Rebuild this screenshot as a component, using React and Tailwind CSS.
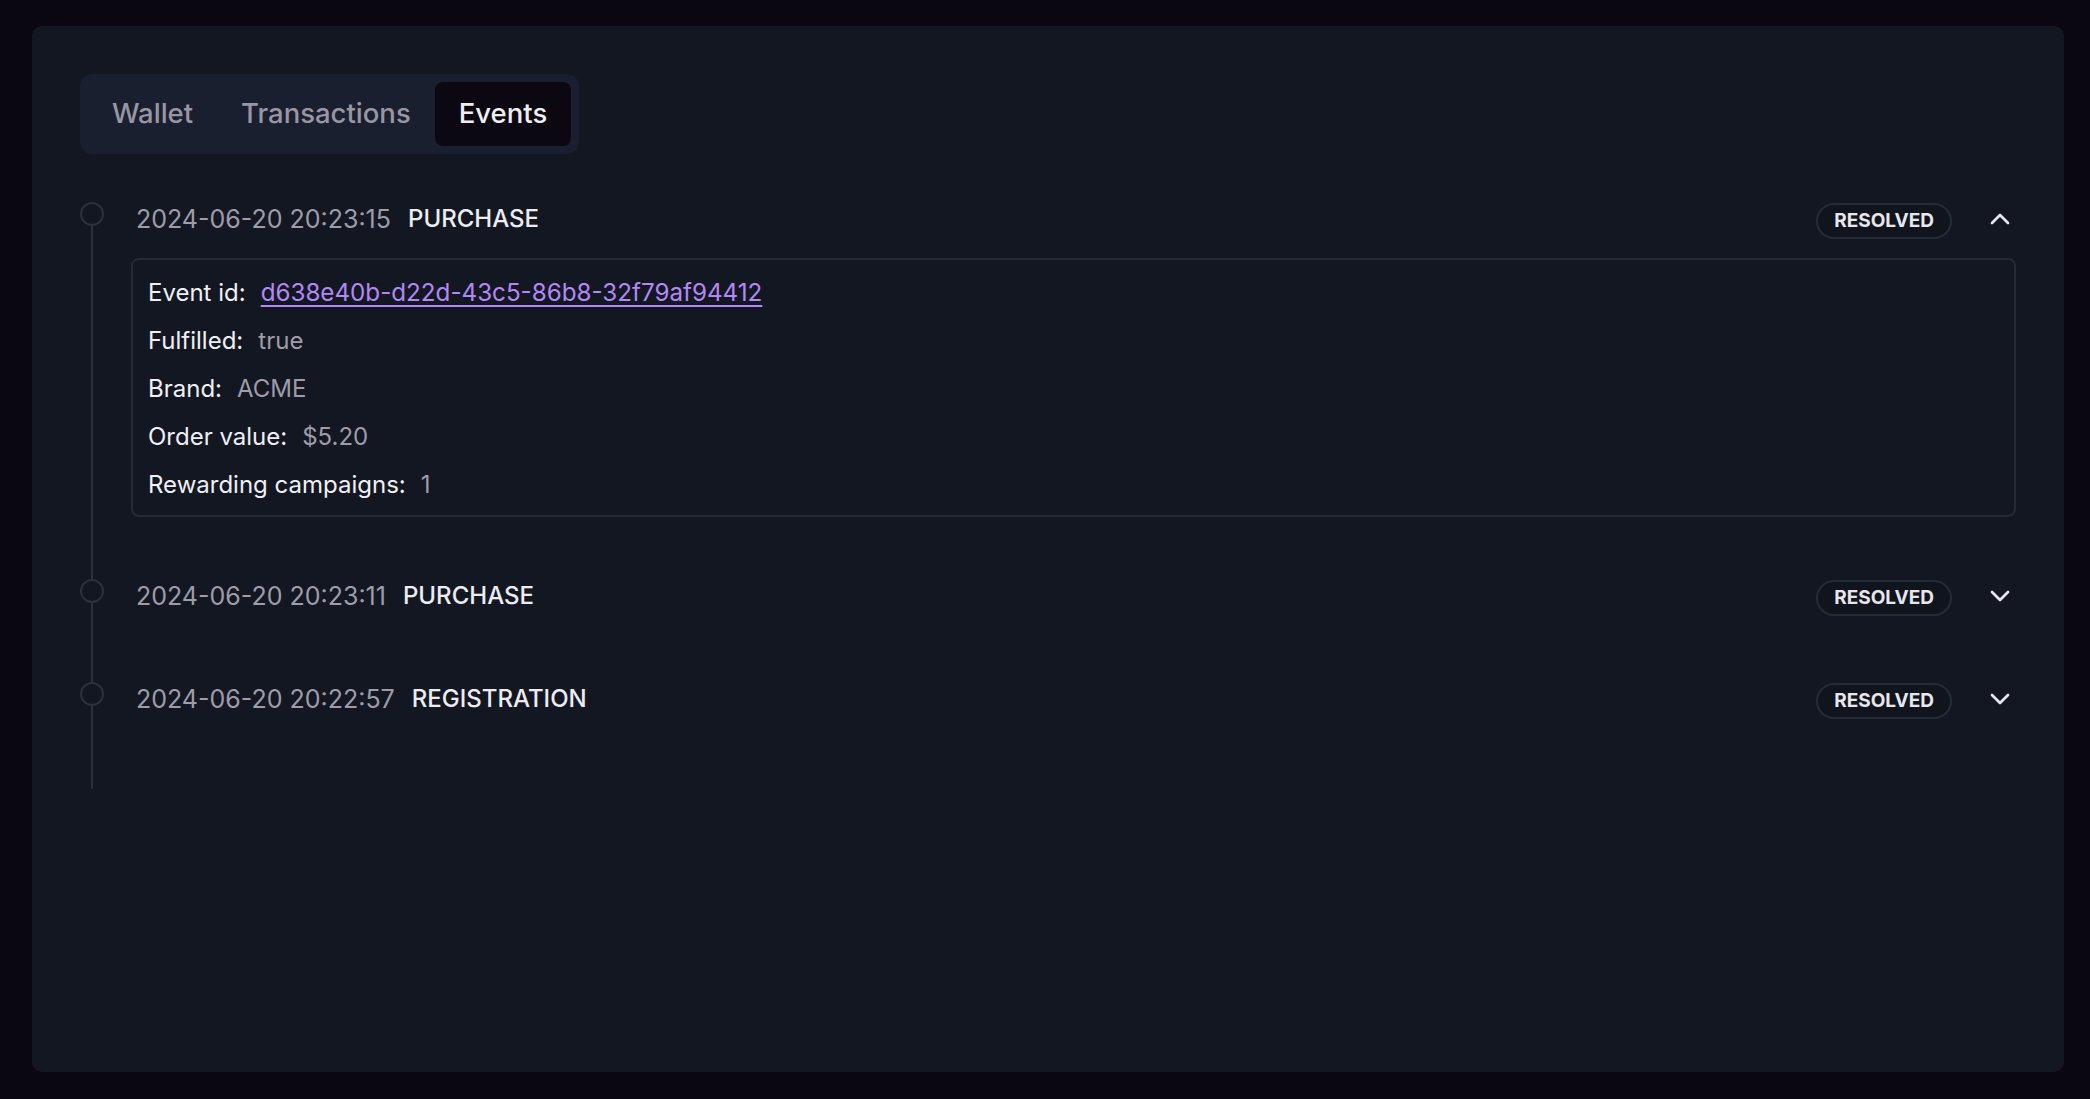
import React from "react";
import { ChevronUp, ChevronDown } from "lucide-react";

const events = [
  {
    date: "2024-06-20 20:23:15",
    type: "PURCHASE",
    open: true,
    details: [
      ["Event id:", "d638e40b-d22d-43c5-86b8-32f79af94412", true],
      ["Fulfilled:", "true"],
      ["Brand:", "ACME"],
      ["Order value:", "$5.20"],
      ["Rewarding campaigns:", "1"],
    ],
  },
  { date: "2024-06-20 20:23:11", type: "PURCHASE", open: false },
  { date: "2024-06-20 20:22:57", type: "REGISTRATION", open: false },
];

function Item({ ev }) {
  return (
    <div className="flex pb-[55px]">
      <div className="w-[24px] shrink-0">
        <div className="relative mt-[7px] h-[24px] w-[24px] rounded-full border-2 border-[#2a303c] bg-[#131722]" />
      </div>
      <div className="ml-[27px] flex-1">
        <div className="flex h-[48px] items-center justify-between pl-[5px]">
          <div className="flex items-center gap-[17px] leading-[48px]">
            <span className="text-[25px] text-[#9e9ca8]">{ev.date}</span>
            <span className="text-[24px] font-medium text-[#ececf1]">{ev.type}</span>
          </div>
          <div className="flex items-center gap-[32px]">
            <span className="mt-[4px] flex h-[36px] items-center rounded-full border-2 border-[#252b37] bg-[#10141d] px-[16px] text-[19px] font-bold text-[#e6e6ec]">
              RESOLVED
            </span>
            {ev.open ? (
              <ChevronUp size={32} strokeWidth={2} className="text-[#e6e6ec]" />
            ) : (
              <ChevronDown size={32} strokeWidth={2} className="text-[#e6e6ec]" />
            )}
          </div>
        </div>
        {ev.open && (
          <div className="mt-[15px] rounded-[8px] border-2 border-[#252a36] px-[15px] pb-[6px] pt-[9px]">
            {ev.details.map(([k, v, link]) => (
              <div key={k} className="flex h-[48px] items-center gap-[15px] text-[24px]">
                <span className="text-[#f0f0f4]">{k}</span>
                {link ? (
                  <span className="text-[24.2px] text-[#b388f5] underline decoration-[2px] underline-offset-[4px]">{v}</span>
                ) : (
                  <span className="text-[#9e9ca8]">{v}</span>
                )}
              </div>
            ))}
          </div>
        )}
      </div>
    </div>
  );
}

export default function App() {
  return (
    <div
      className="min-h-screen bg-[#0b0710] pb-[27px] pl-[32px] pr-[26px] pt-[26px]"
      style={{ fontFamily: "Inter, 'Noto Sans', sans-serif" }}
    >
      <div className="h-[1046px] rounded-[10px] bg-[#131722] p-[48px]">
        <div className="inline-flex h-[80px] items-center rounded-[12px] bg-[#1a1f2f] p-[8px]">
          <button className="h-[64px] rounded-[8px] px-[24px] text-[27.5px] font-medium text-[#9896a3]">Wallet</button>
          <button className="h-[64px] rounded-[8px] px-[24px] text-[27.5px] font-medium text-[#9896a3]">Transactions</button>
          <button className="h-[64px] rounded-[8px] bg-[#0c0812] px-[24px] text-[27.5px] font-medium text-[#eeeef3]">Events</button>
        </div>
        <div className="relative mt-[41px] pb-[11px]">
          <div className="absolute bottom-0 left-[11px] top-[7px] w-[2px] bg-[#2a303c]" />
          {events.map((ev) => (
            <Item key={ev.date} ev={ev} />
          ))}
        </div>
      </div>
    </div>
  );
}
